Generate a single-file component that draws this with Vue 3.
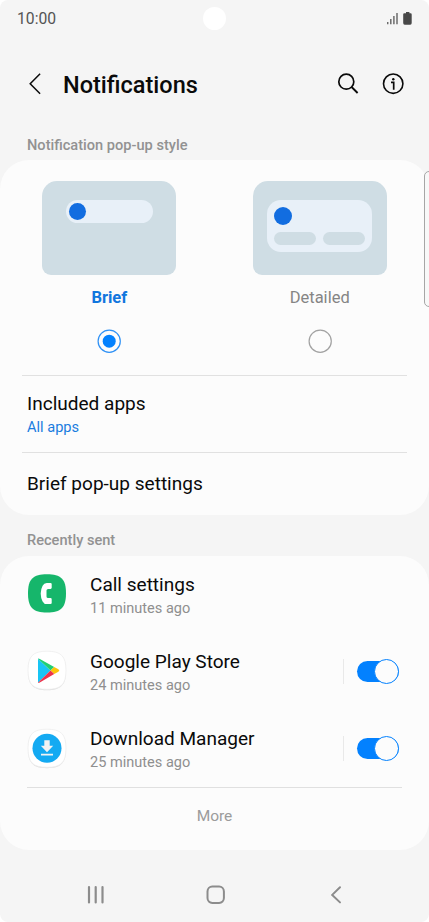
<script setup>
import { ref } from 'vue'

const style = ref('brief')
const styles = [
  { id: 'brief', label: 'Brief' },
  { id: 'detailed', label: 'Detailed' },
]

const apps = ref([
  { id: 'call', name: 'Call settings', time: '11 minutes ago', toggle: false },
  { id: 'play', name: 'Google Play Store', time: '24 minutes ago', toggle: true, on: true },
  { id: 'download', name: 'Download Manager', time: '25 minutes ago', toggle: true, on: true },
])
</script>

<template>
  <div class="phone">
    <div class="status">
      <span class="clock">10:00</span>
      <span class="camera"></span>
      <svg class="indicators" width="26" height="14" viewBox="0 0 26 14">
        <path d="M.7 12.2v-2.3M3.8 12.2V7M6.9 12.2V4.1M10 12.2V1" stroke="#6b6b6b" stroke-width="1.5" fill="none" />
        <path d="M19 0h3.4v1.2h1.2q1.1 0 1.1 1.2v8.7q0 1.6-1.5 1.6h-5.5q-1.5 0-1.5-1.6V2.4q0-1.2 1.1-1.2H19z" fill="#484848" />
      </svg>
    </div>

    <header class="header">
      <svg class="back" width="14" height="24" viewBox="0 0 14 24">
        <path d="M12.1 1.8 2.2 11.7l9.9 10" fill="none" stroke="#0a0a0a" stroke-width="1.5" />
      </svg>
      <h1 class="title">Notifications</h1>
      <svg class="search" width="22" height="22" viewBox="0 0 22 22">
        <circle cx="9.3" cy="8.7" r="7.5" fill="none" stroke="#0a0a0a" stroke-width="1.7" />
        <path d="m14.6 14 6 6" stroke="#0a0a0a" stroke-width="1.8" />
      </svg>
      <svg class="info" width="22" height="22" viewBox="0 0 22 22">
        <circle cx="11.2" cy="10.7" r="9.7" fill="none" stroke="#0a0a0a" stroke-width="1.6" />
        <circle cx="11.3" cy="6.2" r="1.2" fill="#0a0a0a" />
        <path d="M9 9.4h2.7v7.4" fill="none" stroke="#0a0a0a" stroke-width="1.7" />
      </svg>
    </header>

    <h2 class="section">Notification pop-up style</h2>

    <section class="card style-card">
      <div class="choices">
        <div
          v-for="s in styles"
          :key="s.id"
          class="choice"
          :class="{ active: style === s.id }"
          @click="style = s.id"
        >
          <div class="preview">
            <div class="popup" :class="s.id">
              <span class="dot"></span>
              <div v-if="s.id === 'detailed'" class="actions"><i></i><i></i></div>
            </div>
          </div>
          <span class="choice-label">{{ s.label }}</span>
          <svg class="radio" width="24" height="24" viewBox="0 0 24 24">
            <circle class="ring" cx="12.2" cy="12.2" r="11.1" fill="none" />
            <circle v-if="style === s.id" cx="12.2" cy="12.2" r="6.5" fill="#0381fe" />
          </svg>
        </div>
      </div>
      <div class="item included">
        <span class="item-title">Included apps</span>
        <span class="item-sub">All apps</span>
      </div>
      <div class="item settings">
        <span class="item-title">Brief pop-up settings</span>
      </div>
    </section>

    <h2 class="section recent">Recently sent</h2>

    <section class="card recent-card">
      <div v-for="app in apps" :key="app.id" class="app">
        <svg v-if="app.id === 'call'" class="icon" width="40" height="42" viewBox="0 0 40 42">
          <path d="M20 1.2C34 1.2 39 6 39 20.3S34 39.6 20 39.6 1 34.6 1 20.3 6 1.2 20 1.2z" fill="#16b66b" />
          <path d="M19.8 10h3.7q1.2 0 1.2 1.1v3.7q0 1.1-1.2 1.1h-2.4q-1.6 0-1.6 1.7v5.8q0 1.7 1.6 1.7h2.4q1.2 0 1.2 1.1V30q0 1.1-1.2 1.1h-3.7q-2.8 0-4.2-2.7-1.9-3.4-1.9-7.8t1.9-7.9Q17 10 19.8 10z" fill="#fff" />
        </svg>
        <svg v-else-if="app.id === 'play'" class="icon" width="40" height="42" viewBox="0 0 40 42">
          <path d="M20 2C34 2 39 7 39 21s-5 19.2-19 19.2S1 35 1 21 6 2 20 2z" fill="#dedede" />
          <path d="M20 1.2C34 1.2 39 6 39 20.3S34 39.3 20 39.3 1 34.5 1 20.3 6 1.2 20 1.2z" fill="#fff" stroke="#ededed" stroke-width=".8" />
          <path d="M11 8.7v24L23.5 20.5z" fill="#18c5f5" />
          <path d="M11 8.7q.7-.4 1.8.2l14.4 8-3.7 3.6z" fill="#20cf73" />
          <path d="m27.2 16.9 4.2 2.4q1.8 1.2 0 2.4l-4.2 2.4-3.7-3.6z" fill="#fdc50a" />
          <path d="m23.5 20.5 3.7 3.6-14.4 8.4q-1.1.7-1.8.2z" fill="#ec334c" />
        </svg>
        <svg v-else class="icon" width="40" height="42" viewBox="0 0 40 42">
          <path d="M20 2C34 2 39 7 39 21s-5 19.2-19 19.2S1 35 1 21 6 2 20 2z" fill="#dedede" />
          <path d="M20 1.2C34 1.2 39 6 39 20.3S34 39.3 20 39.3 1 34.5 1 20.3 6 1.2 20 1.2z" fill="#fff" stroke="#ededed" stroke-width=".8" />
          <circle cx="20" cy="20.3" r="14.5" fill="#14aaf2" />
          <path d="M17.3 12.3h5.4v5.5h3.5L20 24.2l-6.200-6.400h3.500zM14 25.700h12v1.700H14z" fill="#f3f3f3" />
        </svg>
        <div class="app-text">
          <span class="app-name">{{ app.name }}</span>
          <span class="app-time">{{ app.time }}</span>
        </div>
        <div v-if="app.toggle" class="toggle-wrap">
          <button class="toggle" :class="{ on: app.on }" @click="app.on = !app.on"><span></span></button>
        </div>
      </div>
      <div class="more">More</div>
    </section>

    <nav class="nav">
      <svg width="18" height="20" viewBox="0 0 18 20">
        <path d="M2 2v15.400M8.700 2v15.400M15.500 2v15.400" stroke="#8c8c8c" stroke-width="2.200" stroke-linecap="round" />
      </svg>
      <svg width="20" height="20" viewBox="0 0 20 20">
        <rect x="1.500" y="1.600" width="16.400" height="16.300" rx="4.800" fill="none" stroke="#8c8c8c" stroke-width="2" />
      </svg>
      <svg width="16" height="20" viewBox="0 0 16 20">
        <path d="M14 2.200 6.200 9.900l7.800 7.500" fill="none" stroke="#8c8c8c" stroke-width="2" stroke-linecap="round" />
      </svg>
    </nav>

    <div class="edge-handle"></div>
  </div>
</template>

<style>
body {
  background: #fff;
}
</style>

<style scoped>
.phone {
  position: relative;
  box-sizing: border-box;
  width: 429px;
  height: 922px;
  overflow: hidden;
  display: flex;
  flex-direction: column;
  background: #f5f5f5;
  border-radius: 8px;
  font-family: Roboto, "Liberation Sans", sans-serif;
  color: #0a0a0a;
}
.status {
  height: 37px;
  display: grid;
  grid-template-columns: 1fr 23px 1fr;
  align-items: center;
  padding: 0 17px;
}
.clock {
  font-size: 15.7px;
  color: #545454;
}
.camera {
  width: 23px;
  height: 23px;
  border-radius: 50%;
  background: #fff;
}
.indicators {
  justify-self: end;
  margin-right: -1px;
}
.header {
  height: 94px;
  display: flex;
  align-items: center;
  padding: 0 25px 0 28px;
}
.title {
  flex: 1;
  margin: 2px 0 0 21px;
  font-size: 23.5px;
  font-weight: 500;
  line-height: 30px;
}
.info {
  margin-left: 23px;
}
.section {
  margin: 0;
  height: 29px;
  padding-left: 27px;
  font-size: 14.6px;
  font-weight: 500;
  line-height: 29px;
  color: #929292;
}
.card {
  box-sizing: border-box;
  background: #fcfcfc;
  border-radius: 29px;
}
.style-card {
  height: 354.5px;
  padding-top: 21px;
}
.choices {
  height: 194px;
  display: grid;
  grid-template-columns: 134px 134px;
  column-gap: 76.4px;
  padding-left: 42.3px;
}
.choice {
  display: flex;
  flex-direction: column;
  align-items: center;
}
.preview {
  box-sizing: border-box;
  width: 134px;
  height: 94px;
  padding-top: 19px;
  display: flex;
  justify-content: center;
  align-items: flex-start;
  background: #cfdde4;
  border-radius: 15px 15px 9px 9px;
}
.popup {
  box-sizing: border-box;
  background: #e8f0f8;
}
.popup.brief {
  width: 87px;
  height: 22.5px;
  padding: 3px;
  border-radius: 12px;
}
.popup.detailed {
  width: 105px;
  height: 52px;
  padding: 7px;
  border-radius: 14px;
}
.dot {
  display: block;
  width: 17px;
  height: 17px;
  border-radius: 50%;
  background: #126de0;
}
.detailed .dot {
  width: 18px;
  height: 18px;
}
.actions {
  display: flex;
  justify-content: space-between;
  margin-top: 6.5px;
}
.actions i {
  width: 42px;
  height: 13.5px;
  border-radius: 7px;
  background: #cfdde4;
}
.choice-label {
  margin-top: 13px;
  font-size: 16.5px;
  line-height: 20px;
  color: #858585;
}
.active .choice-label {
  font-weight: 700;
  color: #1176de;
}
.radio {
  margin-top: 21px;
}
.ring {
  stroke: #a2a2a2;
  stroke-width: 1.2px;
}
.active .ring {
  stroke: #2f91f5;
}
.item {
  box-sizing: border-box;
  margin: 0 22px;
  padding-left: 5px;
  display: flex;
  flex-direction: column;
  border-top: 1px solid #e1e1e1;
}
.included {
  height: 77px;
  padding-top: 16px;
}
.settings {
  padding-top: 19px;
}
.item-title {
  font-size: 19.05px;
  line-height: 24px;
}
.item-sub {
  margin-top: 1px;
  font-size: 14.6px;
  line-height: 20px;
  color: #1a7ce0;
}
.section.recent {
  height: 41px;
  padding-top: 11px;
  box-sizing: border-box;
}
.recent-card {
  height: 294.5px;
}
.app {
  height: 77.3px;
  box-sizing: border-box;
  display: flex;
  align-items: center;
  padding: 0 30px 0 27px;
}
.app-text {
  flex: 1;
  margin: 4px 0 0 23px;
  display: flex;
  flex-direction: column;
}
.app-name {
  font-size: 19.05px;
  line-height: 24px;
}
.app-time {
  padding-top: 1px;
  font-size: 14.55px;
  line-height: 22px;
  color: #8f8f8f;
}
.toggle-wrap {
  height: 25px;
  display: flex;
  align-items: center;
  padding-left: 13px;
  border-left: 1px solid #e9e9e9;
}
.toggle {
  width: 42px;
  height: 21px;
  padding: 0;
  display: flex;
  align-items: center;
  border: 0;
  border-radius: 11px;
  background: #b5b5b5;
}
.toggle span {
  box-sizing: border-box;
  flex: none;
  width: 25px;
  height: 25px;
  border: 1.2px solid #b5b5b5;
  border-radius: 50%;
  background: #fcfcfc;
}
.toggle.on {
  justify-content: flex-end;
  background: #0381fe;
}
.toggle.on span {
  border-color: #0381fe;
}
.more {
  margin: 0 27px;
  border-top: 1px solid #e0e0e0;
  text-align: center;
  font-size: 15.5px;
  line-height: 57px;
  color: #9b9b9b;
}
.nav {
  flex: 1;
  display: flex;
  justify-content: space-between;
  align-items: flex-start;
  padding: 35px 87px 0;
}
.edge-handle {
  position: absolute;
  top: 171px;
  right: -6px;
  box-sizing: border-box;
  width: 11px;
  height: 136px;
  border: 1px solid #a6a6a6;
  border-radius: 5px;
  background: #f8f8f8;
}
</style>
